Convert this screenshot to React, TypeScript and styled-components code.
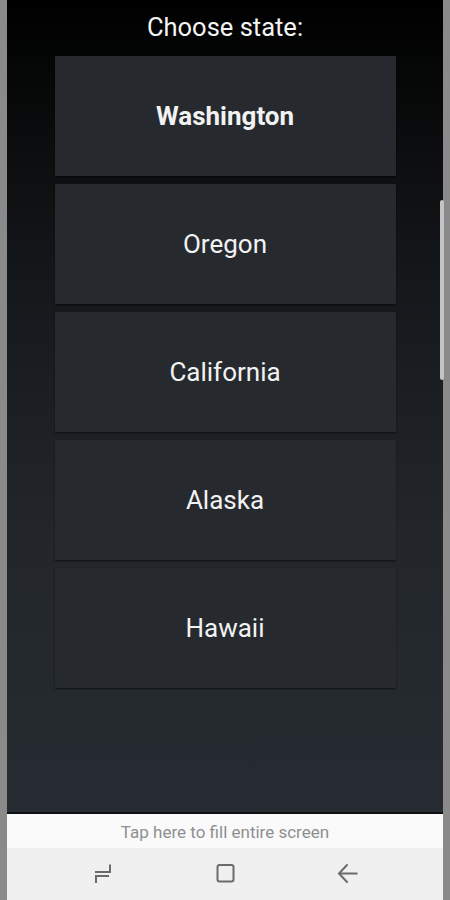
import React from 'react';
import styled, { createGlobalStyle } from 'styled-components';

const GlobalStyle = createGlobalStyle`
  html, body {
    margin: 0;
    padding: 0;
    background: #8a8a8a;
  }
  body {
    font-family: Roboto, "Noto Sans", Arial, sans-serif;
  }
`;

const Shell = styled.div`
  position: relative;
  height: 900px;
  padding: 0 7px;
  display: flex;
  flex-direction: column;
  background: #8a8a8a;
`;

const Screen = styled.div`
  flex: 1;
  display: flex;
  flex-direction: column;
  align-items: center;
  background: linear-gradient(180deg, #000 0%, #050606 8%, #15181b 35%, #22262b 65%, #272c32 100%);
  border-bottom: 2px solid #0d0f11;
`;

const Title = styled.h1`
  margin: 0;
  height: 56px;
  line-height: 54px;
  font-size: 25.5px;
  font-weight: 400;
  color: #f4f4f4;
`;

const StateList = styled.div`
  width: 341px;
  display: flex;
  flex-direction: column;
  gap: 8px;
`;

const StateButton = styled.button<{ $selected?: boolean }>`
  height: 120px;
  border: none;
  border-radius: 1px;
  background: #262a2f;
  box-shadow: 0 1px 2px rgba(0, 0, 0, 0.6);
  color: #f2f2f2;
  font-family: Roboto, "Noto Sans", Arial, sans-serif;
  font-size: 26px;
  font-weight: ${(p) => (p.$selected ? 700 : 400)};
  cursor: pointer;
`;

const Banner = styled.div`
  height: 34px;
  padding-top: 2px;
  box-sizing: border-box;
  display: flex;
  align-items: center;
  justify-content: center;
  background: #fafafa;
  color: #8f8f8f;
  font-size: 17px;
`;

const NavBar = styled.div`
  height: 52px;
  display: flex;
  align-items: center;
  justify-content: center;
  gap: 98px;
  background: #f0f0f0;
`;

const NavIcon = styled.svg`
  width: 24px;
  height: 24px;
  overflow: visible;
  stroke: #6b6b6b;
  stroke-width: 2;
  fill: none;
  stroke-linecap: square;
`;

const ScrollThumb = styled.div`
  position: absolute;
  right: 6px;
  top: 200px;
  width: 4px;
  height: 180px;
  border-radius: 2px;
  background: #c4c4c4;
`;

const states = ['Washington', 'Oregon', 'California', 'Alaska', 'Hawaii'];

const App: React.FC = () => {
  return (
    <>
      <GlobalStyle />
      <Shell>
        <Screen>
          <Title>Choose state:</Title>
          <StateList>
            {states.map((s, i) => (
              <StateButton key={s} $selected={i === 0}>
                {s}
              </StateButton>
            ))}
          </StateList>
        </Screen>
        <Banner>Tap here to fill entire screen</Banner>
        <NavBar>
          <NavIcon viewBox="0 0 24 24">
            <path d="M5 10 H19 V3.5" />
            <path d="M17 14 H5 V20" />
          </NavIcon>
          <NavIcon viewBox="0 0 24 24">
            <rect x="4.5" y="3" width="16" height="16.5" rx="2" />
          </NavIcon>
          <NavIcon viewBox="0 0 24 24">
            <path d="M21.5 11.5 H5" />
            <path d="M12 3 L4 11.5 L12 20" strokeLinecap="round" />
          </NavIcon>
        </NavBar>
        <ScrollThumb />
      </Shell>
    </>
  );
};

export default App;
